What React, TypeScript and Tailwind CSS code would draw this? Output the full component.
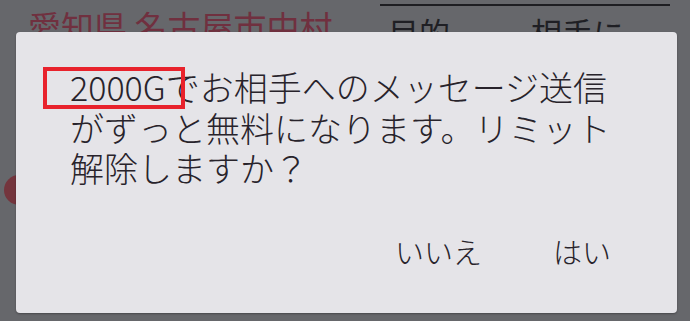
import React from "react";

export default function App() {
  const font = { fontFamily: '"Noto Sans CJK JP", "Noto Sans", sans-serif' };
  return (
    <div
      className="relative w-[690px] h-[321px] overflow-hidden bg-[#66676b]"
      style={font}
    >
      {/* background page */}
      <div className="flex h-full">
        <div className="w-[370px] pl-[28px] pt-[8px] flex flex-col">
          <div className="text-[33px] leading-[36px] text-[#70303f] whitespace-nowrap">
            愛知県 名古屋市中村
          </div>
          <div className="mt-[131px] -ml-[24px] w-[30px] h-[30px] rounded-full bg-[#74353d]" />
        </div>
        <div className="flex flex-col pt-[4px] w-[290px] ml-[10px]">
          <div className="h-[2px] bg-[#1e1e22]" />
          <div className="flex pt-[8px] pl-[8px] text-[31px] leading-[36px] text-[#1f1f24] whitespace-nowrap">
            <span className="w-[143px]">目的</span>
            <span>相手に</span>
          </div>
        </div>
      </div>

      {/* dialog */}
      <div className="absolute left-[16px] top-[32px] w-[661px] h-[281px] rounded-[4px] bg-[#e5e4e8] shadow-[0_1px_2px_rgba(0,0,0,0.3)] flex flex-col">
        <div className="pl-[54px] pt-[35px] text-[34px] leading-[40.5px] font-light text-[#28232b]">
          <div className="whitespace-nowrap">2000Gでお相手へのメッセージ送信</div>
          <div className="whitespace-nowrap">がずっと無料になります。リミット</div>
          <div className="whitespace-nowrap">解除しますか？</div>
        </div>
        <div className="flex justify-end pr-[66px] mt-[44px] text-[29px] leading-[36px] font-light text-[#28232b] gap-[71px]">
          <span>いいえ</span>
          <span>はい</span>
        </div>
        <div className="absolute left-[27px] top-[35px] w-[142px] h-[42px] border-[4px] border-[#e8222c]" />
      </div>
    </div>
  );
}
